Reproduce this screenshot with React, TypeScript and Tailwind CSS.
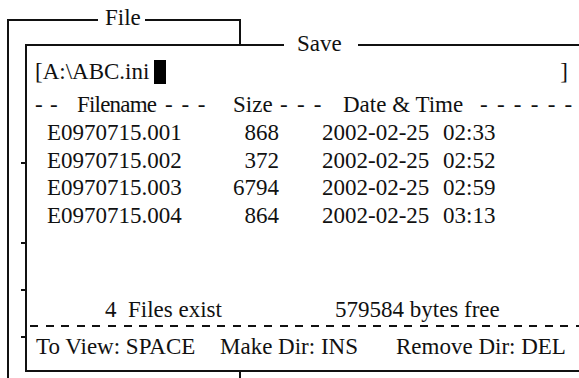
const files = [
  { name: "E0970715.001", size: "868", date: "2002-02-25", time: "02:33" },
  { name: "E0970715.002", size: "372", date: "2002-02-25", time: "02:52" },
  { name: "E0970715.003", size: "6794", date: "2002-02-25", time: "02:59" },
  { name: "E0970715.004", size: "864", date: "2002-02-25", time: "03:13" },
];

const ticks = ["top-[162px]", "top-[242px]", "top-[289px]", "top-[336px]"];

export default function App() {
  return (
    <div className="relative w-[579px] h-[378px] overflow-hidden bg-white text-[#111] text-[23px] leading-[28px] [font-family:'Liberation_Serif','Times_New_Roman',serif] pl-[7px] pt-[19px]">
      {/* File window (behind) */}
      <div className="w-[234px] h-[380px] border-2 border-b-0 border-[#111]" />
      <span className="absolute left-[98px] top-[4px] bg-white pl-[7px] pr-[4px]">File</span>

      {/* separator ticks of the File menu peeking out */}
      {ticks.map((t) => (
        <div key={t} className={`absolute left-[21px] w-[5px] h-[1.5px] bg-[#111] ${t}`} />
      ))}

      {/* Save dialog */}
      <div className="absolute left-[25px] top-[44px] w-[600px] h-[328px] border-2 border-[#111] bg-white flex flex-col pt-[12px] pb-[9px] pl-[8px]">
        <span className="absolute left-[257px] top-[-16px] bg-white pl-[13px] pr-[16px]">Save</span>

        <div className="flex items-center w-[533px]">
          <span className="whitespace-pre">[A:\ABC.ini</span>
          <span className="ml-[5px] w-[12px] h-[24px] bg-black" />
          <span className="ml-auto">]</span>
        </div>

        <div className="flex mt-[5px] whitespace-pre">
          <span className="w-[42px] shrink-0 [word-spacing:1.5px]">- -</span>
          <span className="w-[88px] shrink-0 tracking-[-0.8px]">Filename</span>
          <span className="w-[68px] shrink-0 [word-spacing:3px]">- - -</span>
          <span className="w-[47px] shrink-0">Size</span>
          <span className="w-[63px] shrink-0 [word-spacing:3.5px]">- - -</span>
          <span className="w-[137px] shrink-0">Date &amp; Time</span>
          <span className="[word-spacing:3.5px]">- - - - - -</span>
        </div>

        <div className="flex flex-col">
          {files.map((f) => (
            <div key={f.name} className="flex leading-[27.7px]">
              <span className="w-[155px] pl-[12px]">{f.name}</span>
              <span className="w-[89px] text-right">{f.size}</span>
              <span className="ml-[43px] w-[121px]">{f.date}</span>
              <span>{f.time}</span>
            </div>
          ))}
        </div>

        <div className="mt-auto flex">
          <span className="w-[300px] pl-[70px] whitespace-pre">4  Files exist</span>
          <span>579584 bytes free</span>
        </div>
        <div className="mt-[1.5px] -ml-[5px] h-[1.5px] bg-[repeating-linear-gradient(to_right,#111_0_8px,transparent_8px_15.6px)]" />
        <div className="mt-[6.5px] flex">
          <span className="w-[185px] pl-[1px]">To View: SPACE</span>
          <span className="w-[176px]">Make Dir: INS</span>
          <span>Remove Dir: DEL</span>
        </div>
      </div>
    </div>
  );
}
